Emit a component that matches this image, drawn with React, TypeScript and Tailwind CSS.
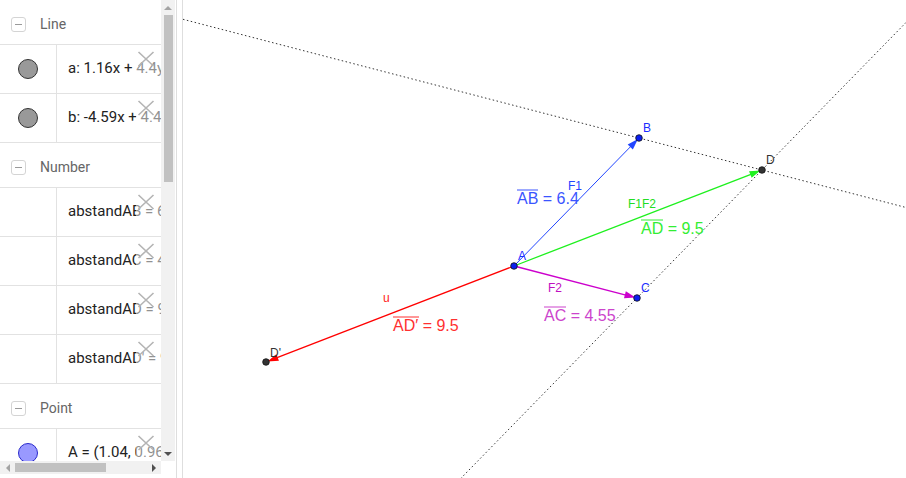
import React from 'react';

type Row =
  | { kind: 'header'; label: string }
  | { kind: 'item'; text: string; dot?: 'grey' | 'blue' };

const rows: Row[] = [
  { kind: 'header', label: 'Line' },
  { kind: 'item', text: 'a: 1.16x + 4.4y = 5.43', dot: 'grey' },
  { kind: 'item', text: 'b: -4.59x + 4.46y = -15.5', dot: 'grey' },
  { kind: 'header', label: 'Number' },
  { kind: 'item', text: 'abstandAB = 6.4' },
  { kind: 'item', text: 'abstandAC = 4.55' },
  { kind: 'item', text: 'abstandAD = 9.5' },
  { kind: 'item', text: "abstandAD' = 9.5" },
  { kind: 'header', label: 'Point' },
  { kind: 'item', text: 'A = (1.04, 0.96)', dot: 'blue' },
];

type P = [number, number];

const A: P = [514, 266];
const B: P = [639, 138];
const C: P = [637, 298];
const D: P = [762, 170];
const Dp: P = [266, 362];

// vector from a point to another, arrow tip sits on the end point
function Vector({ from, to, color, width = 1.3 }: { from: P; to: P; color: string; width?: number }) {
  const dx = to[0] - from[0];
  const dy = to[1] - from[1];
  const l = Math.hypot(dx, dy);
  const ux = dx / l;
  const uy = dy / l;
  const tip: P = [to[0] - ux * 1.5, to[1] - uy * 1.5];
  const len = 11;
  const half = 3.6;
  const base: P = [tip[0] - ux * len, tip[1] - uy * len];
  const left: P = [base[0] - uy * half, base[1] + ux * half];
  const right: P = [base[0] + uy * half, base[1] - ux * half];
  return (
    <g>
      <line x1={from[0]} y1={from[1]} x2={base[0] + ux * 2} y2={base[1] + uy * 2} stroke={color} strokeWidth={width} />
      <polygon points={`${tip[0]},${tip[1]} ${left[0]},${left[1]} ${right[0]},${right[1]}`} fill={color} />
    </g>
  );
}

function Dot({ p, fill }: { p: P; fill: string }) {
  return <circle cx={p[0]} cy={p[1]} r={3.3} fill={fill} stroke="#111" strokeWidth={0.8} />;
}

// value label with an overline above the segment name
function ValueLabel({ x, y, name, rest, color, barWidth }: { x: number; y: number; name: string; rest: string; color: string; barWidth: number }) {
  return (
    <g>
      <line x1={x} y1={y - 14} x2={x + barWidth} y2={y - 14} stroke={color} strokeWidth={1} />
      <text x={x} y={y} fill={color} fontSize={16}>
        {name}
        <tspan>{rest}</tspan>
      </text>
    </g>
  );
}

function MinusBox() {
  return (
    <div className="w-[15px] h-[15px] border border-[#d4d4d4] rounded-[3px] flex items-center justify-center">
      <div className="w-[7px] h-px bg-[#9a9a9a]" />
    </div>
  );
}

function DeleteX() {
  return (
    <div className="absolute top-0 right-0 h-full w-[25px] bg-white/50">
      <svg className="absolute left-[1px] top-[6px]" width="18" height="16" viewBox="0 0 18 16">
        <path d="M1.5 1 L16.5 15 M16.5 1 L1.5 15" stroke="#b4b4b4" strokeWidth="1.6" fill="none" />
      </svg>
    </div>
  );
}

function AlgebraRow({ row }: { row: Row }) {
  if (row.kind === 'header') {
    return (
      <div className="h-[45px] border-b border-[#e2e2e2] flex items-center pl-[11px] pt-[4px] gap-[14px]">
        <MinusBox />
        <span className="text-[14px] text-[#666]">{row.label}</span>
      </div>
    );
  }
  return (
    <div className="h-[49px] border-b border-[#e2e2e2] flex">
      <div className="w-[57px] shrink-0 border-r border-[#e2e2e2] flex items-center justify-center">
        {row.dot === 'grey' && <div className="w-[20px] h-[20px] rounded-full bg-[#999] border border-[#333]" />}
        {row.dot === 'blue' && <div className="w-[20px] h-[20px] rounded-full bg-[#9999ff] border border-[#2a2acc]" />}
      </div>
      <div className="relative flex-1 flex items-center pl-[11px] pb-[2px] overflow-hidden whitespace-nowrap text-[15px] text-[#222]">
        {row.text}
        <DeleteX />
      </div>
    </div>
  );
}

export default function App() {
  return (
    <div className="flex w-[906px] h-[478px] overflow-hidden bg-white" style={{ fontFamily: 'Roboto, "Noto Sans", sans-serif' }}>
      {/* algebra view */}
      <div className="w-[177px] shrink-0 h-full border-r border-[#dedede] flex flex-col">
        <div className="flex h-[461px]">
          <div className="w-[161px] overflow-hidden">
            {rows.map((r, i) => (
              <AlgebraRow key={i} row={r} />
            ))}
          </div>
          <div className="w-[14px] bg-[#f1f1f1] flex flex-col items-center">
            <div className="h-[15px] flex items-center justify-center">
              <div className="w-0 h-0 border-l-[4px] border-r-[4px] border-b-[4px] border-l-transparent border-r-transparent border-b-[#a3a3a3]" />
            </div>
            <div className="w-[9px] h-[167px] bg-[#c1c1c1]" />
            <div className="flex-1" />
            <div className="h-[15px] flex items-center justify-center">
              <div className="w-0 h-0 border-l-[4px] border-r-[4px] border-t-[4px] border-l-transparent border-r-transparent border-t-[#505050]" />
            </div>
          </div>
        </div>
        <div className="flex h-[13px]">
          <div className="w-[161px] bg-[#f1f1f1] flex items-center">
            <div className="w-[15px] flex items-center justify-center">
              <div className="w-0 h-0 border-t-[4px] border-b-[4px] border-r-[4px] border-t-transparent border-b-transparent border-r-[#a3a3a3]" />
            </div>
            <div className="w-[91px] h-[9px] bg-[#c1c1c1]" />
            <div className="flex-1 flex items-center justify-end pr-[5px]">
              <div className="w-0 h-0 border-t-[4px] border-b-[4px] border-l-[4px] border-t-transparent border-b-transparent border-l-[#505050]" />
            </div>
          </div>
        </div>
      </div>

      {/* splitter */}
      <div className="w-[6px] shrink-0 h-full bg-white border-r border-[#dedede]" />

      {/* graphics view */}
      <div className="flex-1 h-full">
        <svg width="723" height="478" viewBox="183 0 723 478" style={{ fontFamily: '"Liberation Sans", Arial, sans-serif' }}>
          <line x1={183} y1={19.3} x2={906} y2={207.5} stroke="#333" strokeWidth={1} strokeDasharray="1.5 2.5" />
          <line x1={906} y1={22.5} x2={461.2} y2={478} stroke="#333" strokeWidth={1} strokeDasharray="1.5 2.5" />

          <Vector from={A} to={B} color="#2246ff" width={1} />
          <Vector from={A} to={D} color="#1ef01e" />
          <Vector from={A} to={C} color="#cc00cc" />
          <Vector from={A} to={Dp} color="#ff0000" />

          <Dot p={A} fill="#0a1ef0" />
          <Dot p={B} fill="#0a1ef0" />
          <Dot p={C} fill="#0a1ef0" />
          <Dot p={D} fill="#333" />
          <Dot p={Dp} fill="#333" />

          <g fontSize={12}>
            <text x={518} y={260} fill="#1a2cff">A</text>
            <text x={643} y={132} fill="#1a2cff">B</text>
            <text x={641} y={292} fill="#1a2cff">C</text>
            <text x={766} y={164} fill="#333">D</text>
            <text x={270} y={357} fill="#333">D'</text>
            <text x={568} y={190} fill="#2246ff">F1</text>
            <text x={628} y={208} fill="#22dd22">F1F2</text>
            <text x={548} y={292} fill="#c010c0">F2</text>
            <text x={383} y={302} fill="#ff2020">u</text>
          </g>

          <ValueLabel x={517} y={204} name="AB" rest=" = 6.4" color="#3a55ff" barWidth={21} />
          <ValueLabel x={641} y={234} name="AD" rest=" = 9.5" color="#33ee33" barWidth={22} />
          <ValueLabel x={544} y={321} name="AC" rest=" = 4.55" color="#cc44cc" barWidth={22} />
          <ValueLabel x={393} y={331} name="AD′" rest=" = 9.5" color="#ff3030" barWidth={26} />
        </svg>
      </div>
    </div>
  );
}
